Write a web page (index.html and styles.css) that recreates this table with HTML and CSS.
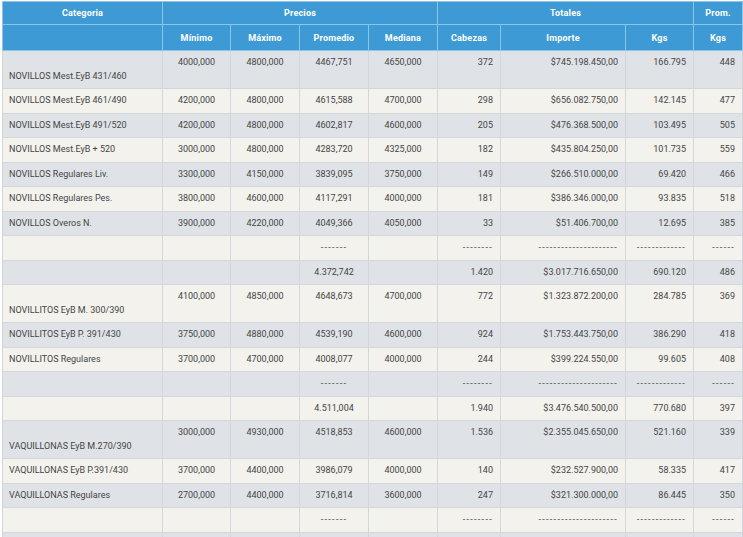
FILE: index.html
```html
<!DOCTYPE html>
<html lang="es">
<head>
<meta charset="utf-8">
<title>Precios</title>
<link rel="stylesheet" href="styles.css">
</head>
<body>
<table class="grid">
  <colgroup>
    <col class="c-cat"><col class="c-p"><col class="c-p2"><col class="c-p2"><col class="c-p2"><col class="c-cab"><col class="c-imp"><col class="c-kgs"><col class="c-prom">
  </colgroup>
  <thead>
    <tr class="h1">
      <th>Categoria</th>
      <th colspan="4">Precios</th>
      <th colspan="3">Totales</th>
      <th>Prom.</th>
    </tr>
    <tr class="h2">
      <th></th>
      <th>Mínimo</th><th>Máximo</th><th>Promedio</th><th>Mediana</th>
      <th>Cabezas</th><th>Importe</th><th>Kgs</th><th>Kgs</th>
    </tr>
  </thead>
  <tbody>
    <tr class="tall"><td class="cat"><br>NOVILLOS Mest.EyB 431/460</td><td>4000,000</td><td>4800,000</td><td>4467,751</td><td>4650,000</td><td class="r">372</td><td class="r">$745.198.450,00</td><td class="r">166.795</td><td class="r">448</td></tr>
    <tr><td class="cat">NOVILLOS Mest.EyB 461/490</td><td>4200,000</td><td>4800,000</td><td>4615,588</td><td>4700,000</td><td class="r">298</td><td class="r">$656.082.750,00</td><td class="r">142.145</td><td class="r">477</td></tr>
    <tr><td class="cat">NOVILLOS Mest.EyB 491/520</td><td>4200,000</td><td>4800,000</td><td>4602,817</td><td>4600,000</td><td class="r">205</td><td class="r">$476.368.500,00</td><td class="r">103.495</td><td class="r">505</td></tr>
    <tr><td class="cat">NOVILLOS Mest.EyB + 520</td><td>3000,000</td><td>4800,000</td><td>4283,720</td><td>4325,000</td><td class="r">182</td><td class="r">$435.804.250,00</td><td class="r">101.735</td><td class="r">559</td></tr>
    <tr><td class="cat">NOVILLOS Regulares Liv.</td><td>3300,000</td><td>4150,000</td><td>3839,095</td><td>3750,000</td><td class="r">149</td><td class="r">$266.510.000,00</td><td class="r">69.420</td><td class="r">466</td></tr>
    <tr><td class="cat">NOVILLOS Regulares Pes.</td><td>3800,000</td><td>4600,000</td><td>4117,291</td><td>4000,000</td><td class="r">181</td><td class="r">$386.346.000,00</td><td class="r">93.835</td><td class="r">518</td></tr>
    <tr><td class="cat">NOVILLOS Overos N.</td><td>3900,000</td><td>4220,000</td><td>4049,366</td><td>4050,000</td><td class="r">33</td><td class="r">$51.406.700,00</td><td class="r">12.695</td><td class="r">385</td></tr>
    <tr class="dash"><td></td><td></td><td></td><td>-------</td><td></td><td class="r">--------</td><td class="r">---------------------</td><td class="r">-------------</td><td class="r">------</td></tr>
    <tr><td></td><td></td><td></td><td>4.372,742</td><td></td><td class="r">1.420</td><td class="r">$3.017.716.650,00</td><td class="r">690.120</td><td class="r">486</td></tr>

    <tr class="tall"><td class="cat"><br>NOVILLITOS EyB M. 300/390</td><td>4100,000</td><td>4850,000</td><td>4648,673</td><td>4700,000</td><td class="r">772</td><td class="r">$1.323.872.200,00</td><td class="r">284.785</td><td class="r">369</td></tr>
    <tr><td class="cat">NOVILLITOS EyB P. 391/430</td><td>3750,000</td><td>4880,000</td><td>4539,190</td><td>4600,000</td><td class="r">924</td><td class="r">$1.753.443.750,00</td><td class="r">386.290</td><td class="r">418</td></tr>
    <tr><td class="cat">NOVILLITOS Regulares</td><td>3700,000</td><td>4700,000</td><td>4008,077</td><td>4000,000</td><td class="r">244</td><td class="r">$399.224.550,00</td><td class="r">99.605</td><td class="r">408</td></tr>
    <tr class="dash"><td></td><td></td><td></td><td>-------</td><td></td><td class="r">--------</td><td class="r">---------------------</td><td class="r">-------------</td><td class="r">------</td></tr>
    <tr><td></td><td></td><td></td><td>4.511,004</td><td></td><td class="r">1.940</td><td class="r">$3.476.540.500,00</td><td class="r">770.680</td><td class="r">397</td></tr>

    <tr class="tall"><td class="cat"><br>VAQUILLONAS EyB M.270/390</td><td>3000,000</td><td>4930,000</td><td>4518,853</td><td>4600,000</td><td class="r">1.536</td><td class="r">$2.355.045.650,00</td><td class="r">521.160</td><td class="r">339</td></tr>
    <tr><td class="cat">VAQUILLONAS EyB P.391/430</td><td>3700,000</td><td>4400,000</td><td>3986,079</td><td>4000,000</td><td class="r">140</td><td class="r">$232.527.900,00</td><td class="r">58.335</td><td class="r">417</td></tr>
    <tr><td class="cat">VAQUILLONAS Regulares</td><td>2700,000</td><td>4400,000</td><td>3716,814</td><td>3600,000</td><td class="r">247</td><td class="r">$321.300.000,00</td><td class="r">86.445</td><td class="r">350</td></tr>
    <tr class="dash"><td></td><td></td><td></td><td>-------</td><td></td><td class="r">--------</td><td class="r">---------------------</td><td class="r">-------------</td><td class="r">------</td></tr>
    <tr><td></td><td></td><td></td><td>&nbsp;</td><td></td><td></td><td></td><td></td><td></td></tr>
  </tbody>
</table>
</body>
</html>
```

FILE: styles.css
```css
html, body {
  margin: 0;
  padding: 0;
  background: #ffffff;
}
body {
  padding: 1px 0 0 2px;
  font-family: Roboto, "Open Sans", "Liberation Sans", sans-serif;
  font-size: 9px;
  color: #454545;
  overflow: hidden;
}
.grid {
  border-collapse: collapse;
  table-layout: fixed;
  width: 741px;
}
.c-cat { width: 160px; }
.c-p { width: 68px; }
.c-p2 { width: 69px; }
.c-cab { width: 63px; }
.c-imp { width: 125px; }
.c-kgs { width: 68px; }
.c-prom { width: 49px; }

.grid th {
  background: #3d9ad4;
  color: #ffffff;
  font-weight: 700;
  font-size: 9px;
  letter-spacing: 0.2px;
  text-align: center;
  border: 1px solid #8cc4ea;
  padding: 0 4px;
}
.h1 th { height: 22px; }
.h2 th { height: 25px; }

.grid td {
  border: 1px solid #d3d7da;
  padding: 5px 7px;
  line-height: 13.5px;
  height: 13.5px;
  text-align: center;
  vertical-align: top;
  white-space: nowrap;
  overflow: hidden;
}
.grid td.cat { text-align: left; padding-left: 6px; }
.grid td.r { text-align: right; }
.grid tbody tr:nth-child(odd) td { background: #dfe3e7; }
.grid tbody tr:nth-child(even) td { background: #f3f2ed; }
.dash td { letter-spacing: 1.3px; }
```
